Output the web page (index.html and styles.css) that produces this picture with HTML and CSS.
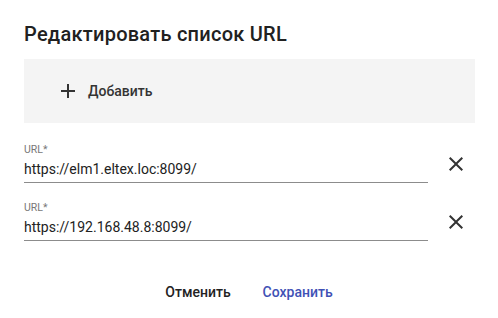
FILE: index.html
```html
<!DOCTYPE html>
<html lang="ru">
<head>
<meta charset="utf-8">
<link rel="stylesheet" href="styles.css">
</head>
<body>
<div class="dialog">
  <h2 class="title">Редактировать список URL</h2>
  <div class="add-box">
    <button class="add-btn">
      <svg class="plus" width="24" height="24" viewBox="0 0 24 24"><path d="M19 13h-6v6h-2v-6H5v-2h6V5h2v6h6v2z" fill="#333"/></svg>
      <span>Добавить</span>
    </button>
  </div>
  <div class="rows">
    <div class="row">
      <div class="field">
        <div class="label">URL*</div>
        <div class="value">https://elm1.eltex.loc:8099/</div>
      </div>
      <button class="del"><svg width="24" height="24" viewBox="0 0 24 24"><path d="M19 6.41L17.59 5 12 10.59 6.41 5 5 6.41 10.59 12 5 17.59 6.41 19 12 13.41 17.59 19 19 17.59 13.41 12z" fill="#333"/></svg></button>
    </div>
    <div class="row">
      <div class="field">
        <div class="label">URL*</div>
        <div class="value">https://192.168.48.8:8099/</div>
      </div>
      <button class="del"><svg width="24" height="24" viewBox="0 0 24 24"><path d="M19 6.41L17.59 5 12 10.59 6.41 5 5 6.41 10.59 12 5 17.59 6.41 19 12 13.41 17.59 19 19 17.59 13.41 12z" fill="#333"/></svg></button>
    </div>
  </div>
  <div class="actions">
    <button class="act cancel">Отменить</button>
    <button class="act save">Сохранить</button>
  </div>
</div>
</body>
</html>
```

FILE: styles.css
```css
html, body {
  margin: 0;
  padding: 0;
  background: #fff;
}
body {
  font-family: Roboto, "Noto Sans", sans-serif;
  color: #222;
}
.dialog {
  width: 498px;
  height: 318px;
  box-sizing: border-box;
  padding: 18px 23px 0 24px;
  background: #fff;
  border-radius: 4px;
}
.title {
  margin: 0;
  font-size: 20px;
  font-weight: 500;
  line-height: 32px;
  color: #212121;
  letter-spacing: 0.25px;
}
.add-box {
  margin-top: 9px;
  height: 64px;
  background: #f4f4f4;
  display: flex;
  align-items: center;
  padding-left: 32px;
}
.add-btn {
  display: flex;
  align-items: center;
  background: none;
  border: 0;
  padding: 0;
  font-family: inherit;
  font-size: 14px;
  font-weight: 500;
  color: #333;
}
.add-btn .plus {
  margin-right: 8px;
}
.rows {
  margin-top: 21px;
  display: flex;
  flex-direction: column;
  gap: 19px;
}
.row {
  display: flex;
  align-items: center;
}
.field {
  width: 404px;
  border-bottom: 1px solid #8c8c8c;
  padding-bottom: 3px;
}
.label {
  font-size: 10.5px;
  line-height: 12px;
  color: #777;
}
.value {
  font-size: 14px;
  line-height: 20px;
  color: #222;
  margin-top: 3px;
}
.del {
  margin-left: 16px;
  background: none;
  border: 0;
  padding: 0;
  width: 24px;
  height: 24px;
  display: flex;
}
.actions {
  margin-top: 41px;
  display: flex;
  justify-content: center;
  gap: 32px;
  padding-right: 1px;
}
.act {
  background: none;
  border: 0;
  padding: 0;
  font-family: inherit;
  font-size: 14px;
  font-weight: 500;
  line-height: 20px;
}
.cancel { color: #222; }
.save { color: #3f51b5; }
```
